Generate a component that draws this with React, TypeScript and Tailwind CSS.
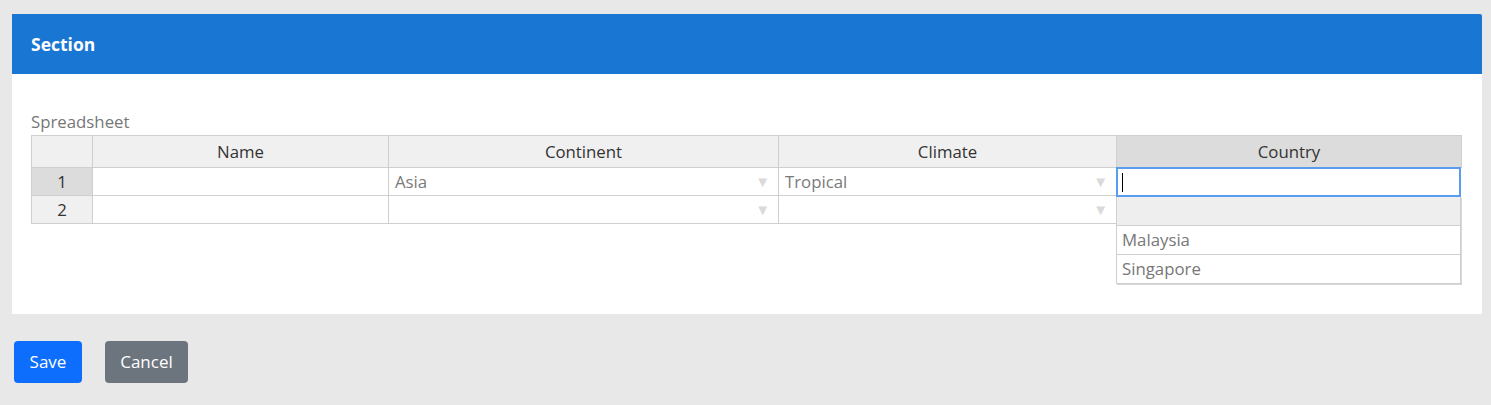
const font = { fontFamily: '"Open Sans", "Noto Sans", sans-serif' }

const columns = [
  { label: 'Name', width: 'w-[296px]' },
  { label: 'Continent', width: 'w-[390px]' },
  { label: 'Climate', width: 'w-[338px]' },
]

const rows = [
  { id: 1, continent: 'Asia', climate: 'Tropical', active: true },
  { id: 2, continent: '', climate: '', active: false },
]

function Arrow() {
  return <span className="text-[15px] leading-none text-[#dadada]">▼</span>
}

function Spreadsheet() {
  return (
    <div className="relative w-[1431px] text-[16.8px]">
      <div className="flex h-[33px] border-t border-l border-[#cfcfcf] bg-[#f0f0f0] text-[#333]">
        <div className="w-[61px] border-r border-b border-[#cfcfcf]" />
        {columns.map((c) => (
          <div
            key={c.label}
            className={`${c.width} flex items-center justify-center border-r border-b border-[#cfcfcf]`}
          >
            {c.label}
          </div>
        ))}
        <div className="flex w-[345px] items-center justify-center border-r border-b border-[#cfcfcf] bg-[#dcdcdc]">
          Country
        </div>
      </div>
      {rows.map((r) => (
        <div key={r.id} className="flex h-[28px] border-l border-[#cfcfcf]">
          <div
            className={`flex w-[61px] items-center justify-center border-r border-b border-[#cfcfcf] text-[#333] ${
              r.active ? 'bg-[#dcdcdc]' : 'bg-[#f0f0f0]'
            }`}
          >
            {r.id}
          </div>
          <div className="w-[296px] border-r border-b border-[#cfcfcf]" />
          <div className="flex w-[390px] items-center justify-between border-r border-b border-[#cfcfcf] pr-[8px] pl-[6px] text-[#7a7a7a]">
            <span>{r.continent}</span>
            <Arrow />
          </div>
          <div className="flex w-[338px] items-center justify-between border-r border-b border-[#cfcfcf] pr-[8px] pl-[6px] text-[#7a7a7a]">
            <span>{r.climate}</span>
            <Arrow />
          </div>
          <div className="w-[345px]" />
        </div>
      ))}

      <div className="absolute top-[32px] left-[1085px] w-[345px]">
        <div className="flex h-[30px] items-center border-2 border-[#5a9cf0] bg-white pl-[4px]">
          <span className="h-[19px] w-px bg-black" />
        </div>
        <div className="border border-t-0 border-[#cfcfcf] bg-white text-[#777] shadow-[1px_1px_0_#d8d8d8]">
          <div className="h-[29px] border-b border-[#cfcfcf] bg-[#eeeeee]" />
          <div className="flex h-[29px] items-center border-b border-[#cfcfcf] pl-[5px]">Malaysia</div>
          <div className="flex h-[28px] items-center pl-[5px]">Singapore</div>
        </div>
      </div>
    </div>
  )
}

export default function App() {
  return (
    <div className="min-h-screen bg-[#e8e8e8] px-[12px] pt-[14px]" style={font}>
      <section className="w-[1470px] rounded-tr-[2px] bg-white">
        <header className="flex h-[60px] items-center rounded-tr-[2px] bg-[#1976d2] px-[19px]">
          <h2 className="text-[17.5px] font-bold text-white">Section</h2>
        </header>
        <div className="px-[19px] pt-[37px] pb-[90px]">
          <p className="mb-[2px] text-[16.8px] leading-[22px] text-[#777]">Spreadsheet</p>
          <Spreadsheet />
        </div>
      </section>
      <div className="mt-[27px] flex gap-[23px] pl-[2px]">
        <button className="h-[42px] w-[68px] rounded-[4px] bg-[#0d6efd] text-[17px] text-white" type="button">
          Save
        </button>
        <button className="h-[42px] w-[83px] rounded-[4px] bg-[#6c757d] text-[17px] text-white" type="button">
          Cancel
        </button>
      </div>
    </div>
  )
}
